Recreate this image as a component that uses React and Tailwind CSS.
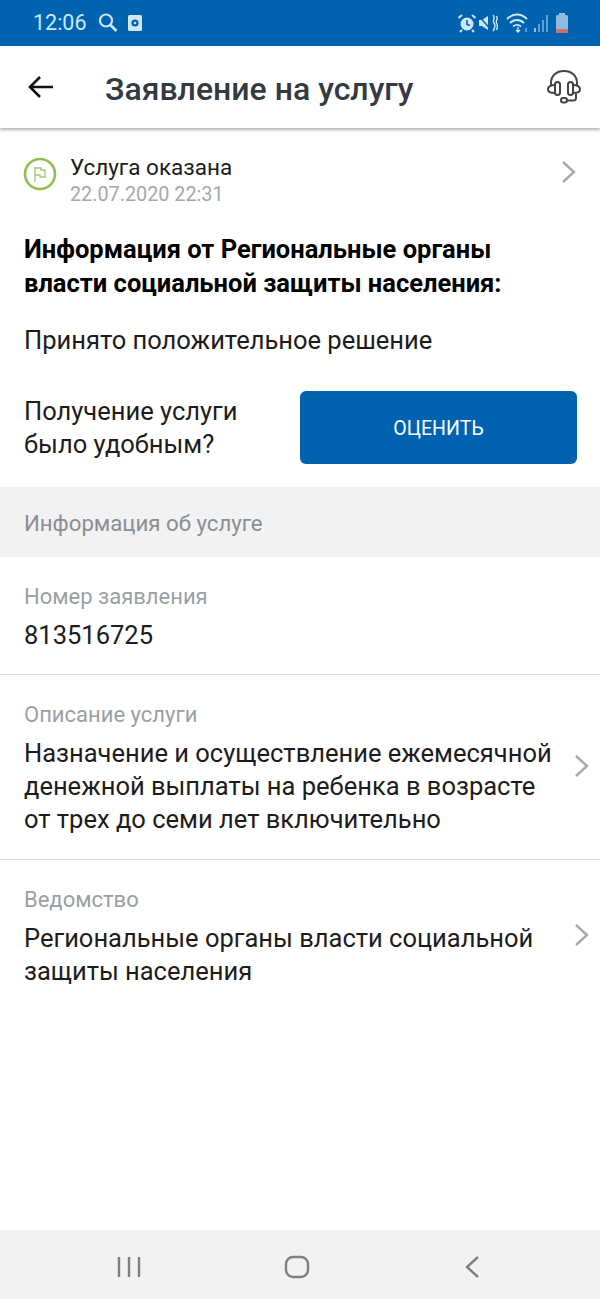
function Chevron({ className = '' }) {
  return (
    <svg width="16" height="24" viewBox="0 0 16 24" fill="none" className={className}>
      <path d="M2 2l11 10L2 22" stroke="#a9a9a9" strokeWidth="2.4" />
    </svg>
  )
}

function StatusBar() {
  return (
    <div className="h-[46px] bg-[#0063b0] flex items-center pl-[33px] pr-[31px] text-[#cfe6f8]">
      <span className="text-[21.5px] leading-none">12:06</span>
      <svg width="22" height="22" viewBox="0 0 22 22" fill="none" className="ml-[10px]">
        <circle cx="9" cy="8.5" r="6" stroke="#cfe6f8" strokeWidth="2.2" />
        <path d="M13.5 13l6 6" stroke="#cfe6f8" strokeWidth="2.6" />
      </svg>
      <svg width="16" height="18" viewBox="0 0 16 18" className="ml-[8px]">
        <rect x="1" y="1" width="14" height="16" rx="1.5" fill="#cfe6f8" />
        <circle cx="8" cy="9" r="3.6" fill="#0063b0" />
        <circle cx="8" cy="9" r="1.3" fill="#cfe6f8" />
      </svg>
      <div className="ml-auto flex items-center">
        <svg width="20" height="20" viewBox="0 0 20 20" fill="none">
          <circle cx="10" cy="11" r="6.5" fill="#cfe6f8" />
          <path d="M10 7v4.5l3 1" stroke="#0063b0" strokeWidth="1.6" />
          <path d="M1.5 5l3.5-3M18.5 5L15 2M5 17l-2 2M15 17l2 2" stroke="#cfe6f8" strokeWidth="2" />
        </svg>
        <svg width="20" height="20" viewBox="0 0 20 20" fill="none" className="ml-[1px]">
          <path d="M1 7h3l6-4v14l-6-4H1z" fill="#cfe6f8" />
          <path d="M1 3l12 14" stroke="#0063b0" strokeWidth="1.4" />
          <path d="M15 2c3 3-1 5 1 8s1 5-1 8M18.5 3c2 3-1 5 0 7s1 5 0 7" stroke="#cfe6f8" strokeWidth="1.4" />
        </svg>
        <svg width="26" height="22" viewBox="0 0 26 22" fill="none" className="ml-[8px]">
          <path d="M1 7c6-6 14-6 20 0M4 11c4-4 10-4 14 0M7 14.5c2.5-2 5.5-2 8 0" stroke="#cfe6f8" strokeWidth="1.8" />
          <path d="M12 15v5M10 18l2 2 2-2" stroke="#cfe6f8" strokeWidth="1.3" />
          <path d="M20 20v-4" stroke="#8fbde2" strokeWidth="1.3" />
        </svg>
        <svg width="18" height="20" viewBox="0 0 18 20" className="ml-[1px]">
          <rect x="1" y="15" width="2" height="4" fill="#8fbde2" />
          <rect x="5" y="11" width="2" height="8" fill="#5c9fd4" />
          <rect x="9" y="7" width="2" height="12" fill="#5c9fd4" />
          <rect x="13" y="2" width="2" height="17" fill="#5c9fd4" />
        </svg>
        <svg width="14" height="22" viewBox="0 0 14 22" className="ml-[4px]">
          <rect x="4" y="1" width="6" height="2" fill="#8fbde2" />
          <rect x="1" y="3" width="12" height="18" rx="1.5" fill="#8fbde2" />
          <rect x="1" y="17" width="12" height="4" rx="1" fill="#d0705f" />
        </svg>
      </div>
    </div>
  )
}

function Header() {
  return (
    <div className="relative h-[82px] flex items-center pl-[28px] pr-[18px] bg-white shadow-[0_2px_3px_rgba(0,0,0,0.3)]">
      <svg width="26" height="24" viewBox="0 0 26 24" fill="none">
        <path d="M25 12H3M12 2L2 12l10 10" stroke="#111" strokeWidth="2.6" />
      </svg>
      <h1 className="ml-[51px] pt-[4px] text-[32px] leading-none font-medium text-[#343a42]">Заявление на услугу</h1>
      <svg width="36" height="36" viewBox="0 0 36 36" fill="none" className="ml-auto" stroke="#444" strokeWidth="2">
        <path d="M5 17V14C5 6.5 10.5 2 18 2s13 4.5 13 12v3" />
        <rect x="9" y="13" width="5" height="13" rx="2.5" />
        <rect x="22" y="13" width="5" height="13" rx="2.5" />
        <path d="M9 16c-4 0-7 1.5-7 4.5S5 24 9 24M27 16c4 0 7 1.5 7 4.5S31 24 27 24" />
        <path d="M30 25v4c0 2-1 2.5-3 2.5h-6" />
        <rect x="15" y="29" width="6" height="4.5" rx="2.2" />
      </svg>
    </div>
  )
}

function Field({ label, children, chevron, chevronClass = '' }) {
  return (
    <div className="flex">
      <div className="flex-1 min-w-0 pr-[18px]">
        <div className="text-[22px] leading-[28px] text-[#9a9fa5]">{label}</div>
        <div className="mt-[8px] text-[25.5px] leading-[33px] text-[#1c1c1c]">{children}</div>
      </div>
      {chevron && <Chevron className={chevronClass} />}
    </div>
  )
}

export default function App() {
  return (
    <div className="w-[600px] h-[1299px] flex flex-col bg-white font-['Roboto',sans-serif] overflow-hidden">
      <StatusBar />
      <Header />
      <main className="flex-1 flex flex-col">
        <div className="pl-[24px] pr-[23px] pt-[24px]">
          <div className="flex">
            <svg width="34" height="34" viewBox="0 0 34 34" fill="none" className="mt-[5px] -ml-[1px]">
              <circle cx="17" cy="17" r="15" stroke="#8fbf50" strokeWidth="2.6" />
              <path d="M12 25V10" stroke="#9fc772" strokeWidth="1.3" />
              <path d="M12 11h6v2h4v7h-5v-2h-5" stroke="#9fc772" strokeWidth="1.3" />
            </svg>
            <div className="ml-[13px] flex-1">
              <div className="text-[22.5px] leading-[30px] text-[#1c1c1c]">Услуга оказана</div>
              <div className="text-[19.8px] leading-[26px] text-[#a4a8ad]">22.07.2020 22:31</div>
            </div>
            <Chevron className="mt-[8px]" />
          </div>
          <div className="mt-[24px] text-[25.5px] leading-[34px] font-bold text-black">
            Информация от Региональные органы<br />власти социальной защиты населения:
          </div>
          <div className="mt-[24px] text-[25.5px] leading-[33px] text-[#1c1c1c]">Принято положительное решение</div>
          <div className="mt-[34px] flex items-center justify-between">
            <div className="text-[25.5px] leading-[33px] text-[#1c1c1c]">Получение услуги<br />было удобным?</div>
            <button className="w-[277px] h-[73px] pt-[3px] rounded-[6px] bg-[#0063b0] text-white text-[19.5px]">ОЦЕНИТЬ</button>
          </div>
        </div>
        <div className="mt-[23px] h-[70px] pt-[3px] bg-[#f2f2f2] flex items-center pl-[24px] text-[22.2px] text-[#8a8f94]">
          Информация об услуге
        </div>
        <div className="pl-[24px] pt-[26px] pb-[22px] pr-[24px] border-b border-[#dcdcdc]">
          <Field label="Номер заявления">813516725</Field>
        </div>
        <div className="pl-[24px] pt-[26px] pb-[23px] pr-[10px] border-b border-[#dcdcdc]">
          <Field label="Описание услуги" chevron chevronClass="mt-[53px]">
            Назначение и осуществление ежемесячной денежной выплаты на ребенка в возрасте от трех до семи лет включительно
          </Field>
        </div>
        <div className="pl-[24px] pt-[26px] pr-[10px]">
          <Field label="Ведомство" chevron chevronClass="mt-[37px]">
            Региональные органы власти социальной защиты населения
          </Field>
        </div>
      </main>
      <nav className="h-[69px] pt-[5px] bg-[#f2f2f2] flex items-center">
        <svg width="24" height="24" viewBox="0 0 24 24" fill="none" className="ml-[117px]" stroke="#808080" strokeWidth="2.4">
          <path d="M2 2v20M12 2v20M22 2v20" />
        </svg>
        <svg width="26" height="26" viewBox="0 0 26 26" fill="none" className="ml-[143px]" stroke="#808080" strokeWidth="2.4">
          <rect x="2" y="3" width="22" height="20" rx="7" />
        </svg>
        <svg width="16" height="24" viewBox="0 0 16 24" fill="none" className="ml-[154px]" stroke="#808080" strokeWidth="2.4">
          <path d="M14 2L3 12l11 10" />
        </svg>
      </nav>
    </div>
  )
}
